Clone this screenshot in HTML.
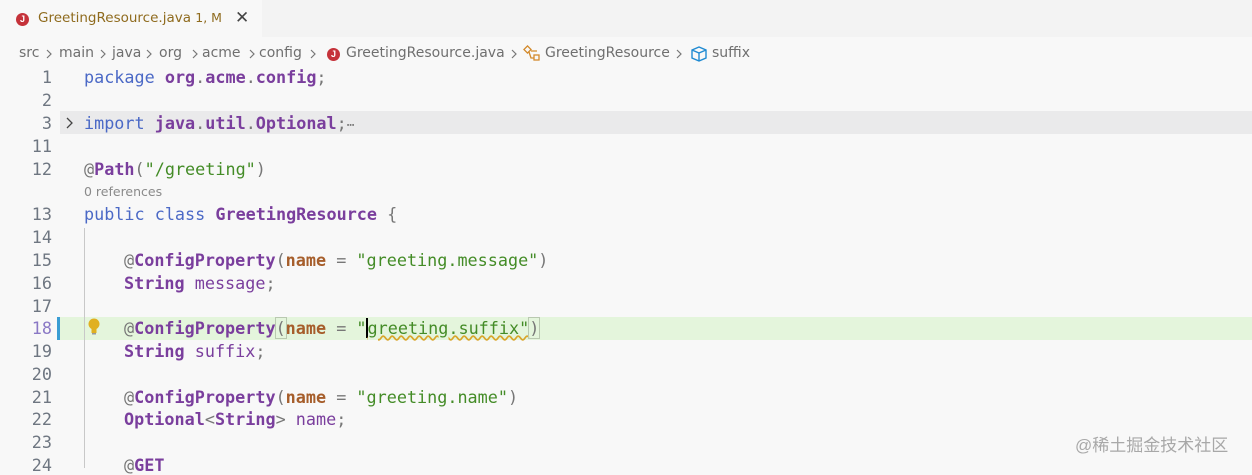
<!DOCTYPE html>
<html><head><meta charset="utf-8"><style>
body{margin:0;width:1252px;height:467px;overflow:hidden;background:#f8f8f8;font-family:"Liberation Sans","DejaVu Sans",sans-serif;position:relative}
.tabbar{position:absolute;left:0;top:0;width:1252px;height:37px;background:#f3f3f3}
.tab{position:absolute;left:0;top:0;height:37px;width:262px;background:#f8f8f8}
.ji{display:inline-block;width:13px;height:13px;border-radius:50%;background:#c5323a;color:#fff;font-size:9px;font-weight:bold;text-align:center;line-height:13px;vertical-align:middle;font-family:"Liberation Sans",sans-serif}
.abs{position:absolute;white-space:pre}
.bc{top:45px;font-size:14px;color:#6f6f6f;font-family:"DejaVu Sans",sans-serif}
.code{font-family:"DejaVu Sans Mono",monospace;font-size:16.8px}
.ln{position:absolute;width:52px;text-align:right;left:0;color:#6e7681;font-family:"DejaVu Sans Mono",monospace;font-size:16.8px}
.k{color:#4b69c6}.t{color:#7a3e9d;font-weight:bold}.p{color:#777}.s{color:#448c27}.o{color:#a65e2b;font-weight:bold}.v{color:#7a3e9d}
</style></head><body>
<div class="tabbar"><div class="tab">
<span class="abs" style="left:16px;top:11px"><span class="ji">J</span></span>
<span class="abs" style="left:38px;top:10px;font-size:13.5px;color:#8f6b1e;font-family:'DejaVu Sans',sans-serif">GreetingResource.java <span style="font-size:12.5px">1, M</span></span>
<span class="abs" style="left:235px;top:8px;font-size:17px;color:#444">✕</span>
</div></div>
<div class="abs bc" style="left:19px">src</div>
<div class="abs bc" style="left:59px">main</div>
<div class="abs bc" style="left:112px">java</div>
<div class="abs bc" style="left:159px">org</div>
<div class="abs bc" style="left:202px">acme</div>
<div class="abs bc" style="left:259px">config</div>
<div class="abs bc" style="left:346px">GreetingResource.java</div>
<div class="abs bc" style="left:545px">GreetingResource</div>
<div class="abs bc" style="left:712px">suffix</div>
<svg class="abs" style="left:0;top:40px" width="760" height="28" fill="none" stroke="#777" stroke-width="1.2">
<path d="M47 10l4 4-4 4M101 10l4 4-4 4M147 10l4 4-4 4M193 10l4 4-4 4M250 10l4 4-4 4M311 10l4 4-4 4M512 10l4 4-4 4M677 10l4 4-4 4"/>
<g stroke="#d38a2c" stroke-width="1.3"><rect x="525" y="7" width="5" height="5" transform="rotate(45 527.5 9.5)"/><rect x="534" y="15" width="5" height="5"/><path d="M529 12l2 6h3M531 11h6"/></g>
<g stroke="#1f8ad2" stroke-width="1.4"><path d="M692 10l7-3 7 3v8l-7 3-7-3zM692 10l7 3 7-3M699 13v8"/></g>
</svg>
<span class="abs" style="left:327px;top:46px"><span class="ji">J</span></span>

<div class="abs" style="left:60px;top:111px;width:1192px;height:23px;background:#eaeaeb"></div>
<div class="abs" style="left:60px;top:317px;width:1192px;height:23px;background:#e4f5dc"></div>
<div class="abs" style="left:57px;top:317px;width:3px;height:23px;background:#3a9dd3"></div>
<div class="abs" style="left:84px;top:228px;width:1px;height:240px;background:#c8c8c8"></div>

<div class="ln" style="top:67px">1</div>
<div class="ln" style="top:90px">2</div>
<div class="ln" style="top:113px">3</div>
<div class="ln" style="top:136px">11</div>
<div class="ln" style="top:159px">12</div>
<div class="ln" style="top:204px">13</div>
<div class="ln" style="top:227px">14</div>
<div class="ln" style="top:250px">15</div>
<div class="ln" style="top:273px">16</div>
<div class="ln" style="top:296px">17</div>
<div class="ln" style="top:318px;color:#8a78c5">18</div>
<div class="ln" style="top:341px">19</div>
<div class="ln" style="top:364px">20</div>
<div class="ln" style="top:387px">21</div>
<div class="ln" style="top:409px">22</div>
<div class="ln" style="top:432px">23</div>
<div class="ln" style="top:455px">24</div>

<svg class="abs" style="left:60px;top:110px" width="20" height="26" fill="none" stroke="#444" stroke-width="1.3"><path d="M7 8l5 5-5 5"/></svg>
<svg class="abs" style="left:84px;top:316px" width="20" height="22"><circle cx="10" cy="8" r="5.5" fill="#e0b020"/><rect x="7.5" y="12" width="5" height="5" fill="#e0b020"/><rect x="8" y="17" width="4" height="1.5" fill="#999"/></svg>

<div class="abs code" style="left:84px;top:67px"><span class="k">package</span> <span class="t">org</span><span class="p">.</span><span class="t">acme</span><span class="p">.</span><span class="t">config</span><span class="p">;</span></div>
<div class="abs code" style="left:84px;top:113px"><span class="k">import</span> <span class="t">java</span><span class="p">.</span><span class="t">util</span><span class="p">.</span><span class="t">Optional</span><span class="p">;</span><span class="p" style="font-size:13px">⋯</span></div>
<div class="abs code" style="left:84px;top:159px"><span class="p">@</span><span class="t">Path</span><span class="p">(</span><span class="s">"/greeting"</span><span class="p">)</span></div>
<div class="abs" style="left:84px;top:184px;font-size:12.5px;color:#8a8a8a;font-family:'DejaVu Sans',sans-serif">0 references</div>
<div class="abs code" style="left:84px;top:204px"><span class="k">public class</span> <span class="t">GreetingResource</span> <span class="p">{</span></div>
<div class="abs code" style="left:124px;top:250px"><span class="p">@</span><span class="t">ConfigProperty</span><span class="p">(</span><span class="o">name</span> <span class="p">=</span> <span class="s">"greeting.message"</span><span class="p">)</span></div>
<div class="abs code" style="left:124px;top:273px"><span class="t">String</span> <span class="v">message</span><span class="p">;</span></div>
<div class="abs code" style="left:124px;top:318px"><span class="p">@</span><span class="t">ConfigProperty</span><span class="p" style="outline:1px solid #b9c9b0">(</span><span class="o">name</span> <span class="p">=</span> <span class="s">"<span style="border-left:2px solid #000;margin-left:-1px"></span><span style="text-decoration:underline wavy #d8a52a">greeting.suffix"</span></span><span class="p" style="outline:1px solid #b9c9b0">)</span></div>
<div class="abs code" style="left:124px;top:341px"><span class="t">String</span> <span class="v">suffix</span><span class="p">;</span></div>
<div class="abs code" style="left:124px;top:387px"><span class="p">@</span><span class="t">ConfigProperty</span><span class="p">(</span><span class="o">name</span> <span class="p">=</span> <span class="s">"greeting.name"</span><span class="p">)</span></div>
<div class="abs code" style="left:124px;top:409px"><span class="t">Optional</span><span class="p">&lt;</span><span class="t">String</span><span class="p">&gt;</span> <span class="v">name</span><span class="p">;</span></div>
<div class="abs code" style="left:124px;top:455px"><span class="p">@</span><span class="t">GET</span></div>

<div class="abs" style="left:1075px;top:431px;font-size:17px;color:#a8a8a8;font-family:'Liberation Sans','Noto Sans CJK SC',sans-serif">@稀土掘金技术社区</div>
</body></html>
